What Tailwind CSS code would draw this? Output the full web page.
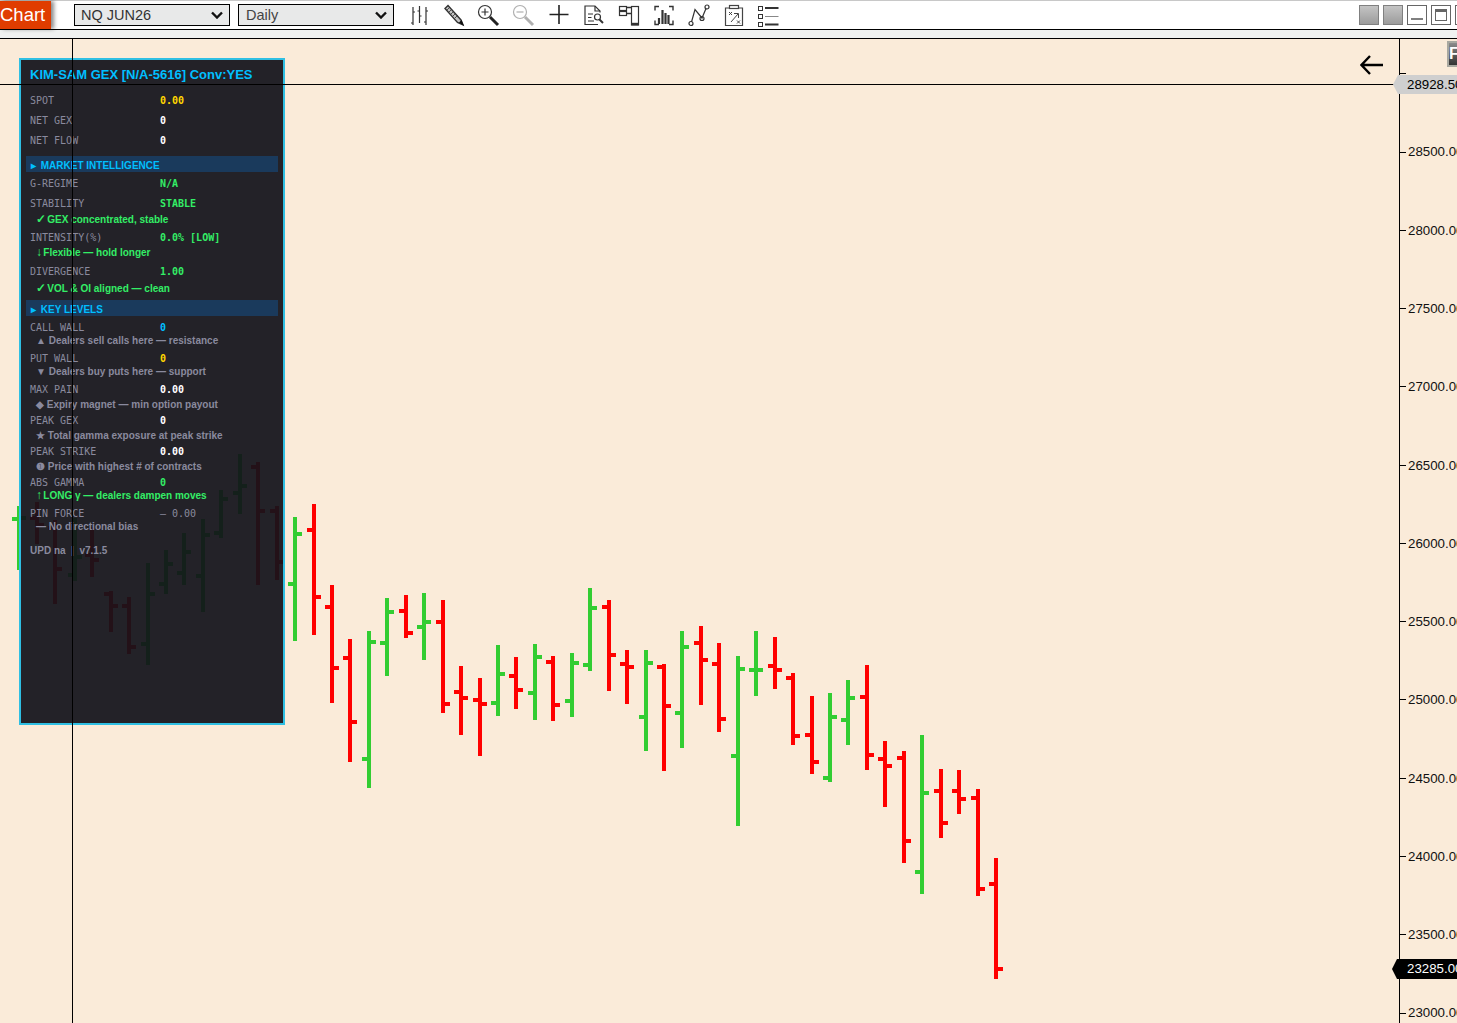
<!DOCTYPE html>
<html lang="en">
<head>
  <meta charset="UTF-8">
  <title>Chart</title>
  <script src="https://cdn.jsdelivr.net/npm/@tailwindcss/browser@4"></script>
</head>
<body class="h-screen overflow-hidden bg-white font-['Liberation_Sans',Arial,sans-serif] flex flex-col">

  <!-- Toolbar -->
  <div class="h-px bg-[#c8c8c8]"></div>
  <header class="h-[28px] flex items-center shrink-0 relative">
    <div class="w-[51px] h-[28px] bg-[#e03c00] text-white text-[18.500px] leading-[27px] shadow-[3px_0_4px_rgba(0,0,0,0.45)] overflow-hidden">Chart</div>
    <div class="ml-[23px] w-[156px] h-[22px] border border-black bg-[#e8e9e9] flex items-center justify-between pl-[6px] pr-[6px] text-[#333] text-[14.500px]">
      <span class="pt-px">NQ JUN26</span>
      <svg width="12" height="8" viewBox="0 0 12 8"><path d="M1 1.5 6 6.5 11 1.5" fill="none" stroke="#111" stroke-width="2.4"/></svg>
    </div>
    <div class="ml-[8px] w-[156px] h-[22px] border border-black bg-[#e8e9e9] flex items-center justify-between pl-[7px] pr-[6px] text-[#444] text-[14.500px]">
      <span class="pt-px">Daily</span>
      <svg width="12" height="8" viewBox="0 0 12 8"><path d="M1 1.5 6 6.5 11 1.5" fill="none" stroke="#111" stroke-width="2.4"/></svg>
    </div>
    <div class="ml-[13.500px] flex gap-[10.900px] text-[#333]">
      <!-- bars -->
      <svg class="w-6 h-6" viewBox="0 0 24 24" fill="none" stroke="currentColor" stroke-width="1.2"><path d="M5 4v18M11.500 3v17M18 4v18M3 20h2M5 9h2M9.500 8h2M11.500 13h2M16 19h2M18 8h2"/></svg>
      <!-- pencil -->
      <svg class="w-6 h-6" viewBox="0 0 24 24"><path d="M3 5.500 6 2.500 19 17l2 5-5.500-2.500Z" fill="#c4c4c4" stroke="#333" stroke-width="1.400"/><path d="M5 7 8 4M7 9l3-3M9 11l3-3M11 13l3-3M13 15l3-3" stroke="#333" stroke-width="0.800"/><path d="M17 19.500 19.500 17 22 23Z" fill="#111"/></svg>
      <!-- zoom in -->
      <svg class="w-6 h-6" viewBox="0 0 24 24" fill="none" stroke="#333"><circle cx="8" cy="9" r="6.500" stroke-width="1.200"/><path d="M4.500 9h7M8 5.500v7" stroke-width="1.200"/><path d="M13 14l8 8" stroke-width="3" stroke="#222"/></svg>
      <!-- zoom out -->
      <svg class="w-6 h-6" viewBox="0 0 24 24" fill="none" stroke="#b0b0b0"><circle cx="8" cy="9" r="6.500" stroke-width="1.200"/><path d="M4.500 9h7" stroke-width="1.200"/><path d="M13 14l8 8" stroke-width="3"/></svg>
      <!-- cross -->
      <svg class="w-6 h-6" viewBox="0 0 24 24" fill="none" stroke="#222" stroke-width="1.600"><path d="M12 2v19M2.500 11.500h19"/></svg>
      <!-- document search -->
      <svg class="w-6 h-6" viewBox="0 0 24 24" fill="none" stroke="#333" stroke-width="1.200"><path d="M16 21.500H3V3h10l5 5v1.500"/><path d="M13 3v5h5" stroke-width="1.200"/><path d="M6 11h5M6 14.500h3.500M6 18h6"/><circle cx="15.500" cy="14" r="3"/><path d="M17.500 16.500l3.500 3.500" stroke-width="2"/></svg>
      <!-- levels panel -->
      <svg class="w-6 h-6" viewBox="0 0 24 24" fill="none" stroke="#333" stroke-width="1.200"><rect x="2.500" y="3.500" width="7" height="4"/><rect x="2.500" y="8.500" width="7" height="4"/><path d="M9.500 4.500h4.500M9.500 10.500h4.500" stroke-width="1.600"/><rect x="14.500" y="3.500" width="7" height="18.500"/><path d="M14.500 21h7" stroke-width="2.400"/></svg>
      <!-- volume -->
      <svg class="w-6 h-6" viewBox="0 0 24 24" fill="none" stroke="#333"><path d="M7 3.500H3v4M17 3.500h4v4M7 21.500H3v-4M17 21.500h4v-4" stroke-width="1.400"/><path d="M7 21V15M10.500 21V7M13.500 21V10M16.500 21V12" stroke-width="2.200"/></svg>
      <!-- line with nodes -->
      <svg class="w-6 h-6" viewBox="0 0 24 24" fill="none" stroke="#333" stroke-width="1.200"><path d="M4.500 19 8 6.500 15 15 19 5.500"/><circle cx="4" cy="20.500" r="2"/><circle cx="15" cy="15.500" r="2"/><circle cx="20" cy="4" r="2"/></svg>
      <!-- clipboard -->
      <svg class="w-6 h-6" viewBox="0 0 24 24" fill="none" stroke="#444" stroke-width="1.200"><path d="M7 5H3.500v17.500h17V5H17"/><rect x="7.500" y="2.500" width="9" height="3"/><path d="M7 9l3 3M10 9l-3 3M15 17.500l3 3M18 17.500l-3 3" stroke-width="1"/><path d="M9 19 16 11M12 10.500h4.500V15" stroke-width="1"/></svg>
      <!-- list -->
      <svg class="w-6 h-6" viewBox="0 0 24 24" fill="none" stroke="#333"><rect x="2.500" y="3.500" width="4" height="4" stroke-width="1"/><rect x="2.500" y="11.500" width="4" height="4" stroke-width="1"/><rect x="2.500" y="19.500" width="4" height="4" stroke-width="1"/><path d="M9 5h13.500M9 21.500h13.500" stroke-width="1.800"/><path d="M9 13.500h13.500" stroke-width="1" stroke="#888"/></svg>
    </div>
    <!-- window buttons -->
    <div class="ml-auto flex gap-[4px] -mr-[18px] shrink-0">
      <div class="w-[20px] h-[20px] border border-[#808080] bg-linear-to-b from-[#c4c4c4] to-[#9c9c9c]"></div>
      <div class="w-[20px] h-[20px] border border-[#808080] bg-linear-to-b from-[#c4c4c4] to-[#9c9c9c]"></div>
      <div class="w-[20px] h-[20px] border border-[#666] bg-white flex items-end justify-center pb-[4px]"><div class="w-[12px] h-[2px] bg-[#808080]"></div></div>
      <div class="w-[20px] h-[20px] border border-[#666] bg-white flex items-center justify-center"><div class="w-[12px] h-[12px] border border-[#666] border-t-[3px]"></div></div>
      <div class="w-[20px] h-[20px] border border-[#666] bg-white"></div>
    </div>
  </header>
  <div class="h-[10px] shrink-0 bg-[#f0f2f1] border-y border-black"></div>

  <!-- Chart area -->
  <main class="relative flex-1 flex bg-[#faebd9] overflow-hidden">
    <div class="relative w-[1399px] shrink-0">
      <svg id="bars" class="absolute inset-0" width="1399" height="984" viewBox="0 39 1399 984"></svg>

      <!-- GEX panel -->
      <section class="absolute left-[19px] top-[19px] w-[266px] h-[667px] border-2 border-[#2fbfe3] bg-[#12121a]/[.93]">
        <div class="mt-[5px] h-[20px] pl-[9px] leading-[20px] text-[13px] font-bold text-[#00bfff] whitespace-nowrap">KIM-SAM GEX [N/A-5616] Conv:YES</div>

        <div class="mt-[8px] h-[14px] pl-[9px] flex items-center font-['DejaVu_Sans_Mono',monospace] text-[10px]"><span class="w-[130px] text-[#8a8a9e]">SPOT</span><span class="text-[#ffd700] font-bold">0.00</span></div>
        <div class="mt-1.5 h-[14px] pl-[9px] flex items-center font-['DejaVu_Sans_Mono',monospace] text-[10px]"><span class="w-[130px] text-[#8a8a9e]">NET GEX</span><span class="text-white font-bold">0</span></div>
        <div class="mt-1.5 h-[14px] pl-[9px] flex items-center font-['DejaVu_Sans_Mono',monospace] text-[10px]"><span class="w-[130px] text-[#8a8a9e]">NET FLOW</span><span class="text-white font-bold">0</span></div>

        <h3 class="mt-[9px] mx-[5px] h-[16px] pl-[5px] bg-[#1a3a5c] text-[#00bfff] text-[10px] font-bold leading-[19px]"><span class="mr-[2px]">▸</span> MARKET INTELLIGENCE</h3>
        <div class="mt-1 h-[14px] pl-[9px] flex items-center font-['DejaVu_Sans_Mono',monospace] text-[10px]"><span class="w-[130px] text-[#8a8a9e]">G-REGIME</span><span class="text-[#33ee66] font-bold">N/A</span></div>
        <div class="mt-1.5 h-[14px] pl-[9px] flex items-center font-['DejaVu_Sans_Mono',monospace] text-[10px]"><span class="w-[130px] text-[#8a8a9e]">STABILITY</span><span class="text-[#33ee66] font-bold">STABLE</span></div>
        <div class="mt-[3px] h-[12px] pl-[15px] leading-[13px] text-[10px] font-bold text-[#33ee66] whitespace-nowrap"><span class="text-[12px] -mr-[1.500px]">✓</span> GEX concentrated, stable</div>
        <div class="mt-[5px] h-[14px] pl-[9px] flex items-center font-['DejaVu_Sans_Mono',monospace] text-[10px]"><span class="w-[130px] text-[#8a8a9e]">INTENSITY(%)</span><span class="text-[#33ee66] font-bold">0.0% [LOW]</span></div>
        <div class="mt-0.5 h-[12px] pl-[15px] leading-[13px] text-[10px] font-bold text-[#33ee66] whitespace-nowrap"><span class="text-[12px] -mr-[1.500px]">↓</span> Flexible — hold longer</div>
        <div class="mt-1.5 h-[14px] pl-[9px] flex items-center font-['DejaVu_Sans_Mono',monospace] text-[10px]"><span class="w-[130px] text-[#8a8a9e]">DIVERGENCE</span><span class="text-[#33ee66] font-bold">1.00</span></div>
        <div class="mt-1 h-[12px] pl-[15px] leading-[13px] text-[10px] font-bold text-[#33ee66] whitespace-nowrap"><span class="text-[12px] -mr-[1.500px]">✓</span> VOL &amp; OI aligned — clean</div>

        <h3 class="mt-1.5 mx-[5px] h-[16px] pl-[5px] bg-[#1a3a5c] text-[#00bfff] text-[10px] font-bold leading-[19px]"><span class="mr-[2px]">▸</span> KEY LEVELS</h3>
        <div class="mt-1 h-[14px] pl-[9px] flex items-center font-['DejaVu_Sans_Mono',monospace] text-[10px]"><span class="w-[130px] text-[#8a8a9e]">CALL WALL</span><span class="text-[#00bfff] font-bold">0</span></div>
        <div class="h-[12px] pl-[15px] leading-[13px] text-[10px] font-bold text-[#8a8a9e] whitespace-nowrap">▲ Dealers sell calls here — resistance</div>
        <div class="mt-[5px] h-[14px] pl-[9px] flex items-center font-['DejaVu_Sans_Mono',monospace] text-[10px]"><span class="w-[130px] text-[#8a8a9e]">PUT WALL</span><span class="text-[#ffd700] font-bold">0</span></div>
        <div class="h-[12px] pl-[15px] leading-[13px] text-[10px] font-bold text-[#8a8a9e] whitespace-nowrap">▼ Dealers buy puts here — support</div>
        <div class="mt-[5px] h-[14px] pl-[9px] flex items-center font-['DejaVu_Sans_Mono',monospace] text-[10px]"><span class="w-[130px] text-[#8a8a9e]">MAX PAIN</span><span class="text-white font-bold">0.00</span></div>
        <div class="mt-0.5 h-[12px] pl-[15px] leading-[13px] text-[10px] font-bold text-[#8a8a9e] whitespace-nowrap">◆ Expiry magnet — min option payout</div>
        <div class="mt-[3px] h-[14px] pl-[9px] flex items-center font-['DejaVu_Sans_Mono',monospace] text-[10px]"><span class="w-[130px] text-[#8a8a9e]">PEAK GEX</span><span class="text-white font-bold">0</span></div>
        <div class="mt-0.5 h-[12px] pl-[15px] leading-[13px] text-[10px] font-bold text-[#8a8a9e] whitespace-nowrap">★ Total gamma exposure at peak strike</div>
        <div class="mt-[3px] h-[14px] pl-[9px] flex items-center font-['DejaVu_Sans_Mono',monospace] text-[10px]"><span class="w-[130px] text-[#8a8a9e]">PEAK STRIKE</span><span class="text-white font-bold">0.00</span></div>
        <div class="mt-0.5 h-[12px] pl-[15px] leading-[13px] text-[10px] font-bold text-[#8a8a9e] whitespace-nowrap">❶ Price with highest # of contracts</div>
        <div class="mt-[3px] h-[14px] pl-[9px] flex items-center font-['DejaVu_Sans_Mono',monospace] text-[10px]"><span class="w-[130px] text-[#8a8a9e]">ABS GAMMA</span><span class="text-[#33ee66] font-bold">0</span></div>
        <div class="h-[12px] pl-[15px] leading-[13px] text-[10px] font-bold text-[#33ee66] whitespace-nowrap"><span class="text-[12px] -mr-[1.500px]">↑</span> LONG γ — dealers dampen moves</div>
        <div class="mt-[5px] h-[14px] pl-[9px] flex items-center font-['DejaVu_Sans_Mono',monospace] text-[10px]"><span class="w-[130px] text-[#8a8a9e]">PIN FORCE</span><span class="text-[#8a8a9e]">— 0.00</span></div>
        <div class="h-[12px] pl-[15px] leading-[13px] text-[10px] font-bold text-[#8a8a9e] whitespace-nowrap">— No directional bias</div>
        <div class="mt-[11px] h-[14px] pl-[9px] leading-[15px] text-[10px] font-bold text-[#8a8a9e] whitespace-pre">UPD na  |  v7.1.5</div>
      </section>

      <!-- Crosshair -->
      <div class="absolute left-[72px] top-0 bottom-0 w-px bg-black"></div>
      <div class="absolute left-0 right-0 top-[45px] h-px bg-black"></div>

      <!-- Back arrow -->
      <svg class="absolute left-[1360px] top-[16px]" width="24" height="20" viewBox="0 0 24 20" fill="none" stroke="#000" stroke-width="2.400"><path d="M10 1 1.500 10l8.500 9M2 10h21"/></svg>
    </div>

    <!-- Price axis -->
    <aside class="relative flex-1 border-l border-black text-[13.300px] leading-none text-[#111] whitespace-nowrap overflow-hidden">
      <div class="flex flex-col mt-[-4.300px]">
        <div class="h-[78.270px] flex items-center"><i class="w-[6px] h-px bg-black shrink-0"></i></div>
        <div class="h-[78.270px] flex items-center"><i class="w-[6px] h-px bg-black shrink-0"></i><span class="ml-[2px]">28500.00</span></div>
        <div class="h-[78.270px] flex items-center"><i class="w-[6px] h-px bg-black shrink-0"></i><span class="ml-[2px]">28000.00</span></div>
        <div class="h-[78.270px] flex items-center"><i class="w-[6px] h-px bg-black shrink-0"></i><span class="ml-[2px]">27500.00</span></div>
        <div class="h-[78.270px] flex items-center"><i class="w-[6px] h-px bg-black shrink-0"></i><span class="ml-[2px]">27000.00</span></div>
        <div class="h-[78.270px] flex items-center"><i class="w-[6px] h-px bg-black shrink-0"></i><span class="ml-[2px]">26500.00</span></div>
        <div class="h-[78.270px] flex items-center"><i class="w-[6px] h-px bg-black shrink-0"></i><span class="ml-[2px]">26000.00</span></div>
        <div class="h-[78.270px] flex items-center"><i class="w-[6px] h-px bg-black shrink-0"></i><span class="ml-[2px]">25500.00</span></div>
        <div class="h-[78.270px] flex items-center"><i class="w-[6px] h-px bg-black shrink-0"></i><span class="ml-[2px]">25000.00</span></div>
        <div class="h-[78.270px] flex items-center"><i class="w-[6px] h-px bg-black shrink-0"></i><span class="ml-[2px]">24500.00</span></div>
        <div class="h-[78.270px] flex items-center"><i class="w-[6px] h-px bg-black shrink-0"></i><span class="ml-[2px]">24000.00</span></div>
        <div class="h-[78.270px] flex items-center"><i class="w-[6px] h-px bg-black shrink-0"></i><span class="ml-[2px]">23500.00</span></div>
        <div class="h-[78.270px] flex items-center"><i class="w-[6px] h-px bg-black shrink-0"></i><span class="ml-[2px]">23000.00</span></div>
      </div>
    </aside>

    <!-- Price tags -->
    <div class="absolute left-[1393px] top-[36px] w-[64px] h-[19px] pl-[14px] bg-[#cfcfcf] text-[13.300px] leading-[19px] text-black whitespace-nowrap overflow-hidden [clip-path:polygon(5px_0,100%_0,100%_100%,5px_100%,0_50%)]">28928.50</div>
    <div class="absolute left-[1392px] top-[920px] w-[65px] h-[20px] pl-[15px] bg-black text-[13.300px] leading-[20px] text-white whitespace-nowrap overflow-hidden [clip-path:polygon(5px_0,100%_0,100%_100%,5px_100%,0_50%)]">23285.00</div>

    <!-- F button -->
    <div class="absolute left-[1447px] top-[2px] w-[12px] h-[26px] border-2 border-[#a8a8a0] bg-linear-to-b from-[#8c8c8c] to-[#333] text-white text-[16px] font-bold leading-[22px] overflow-hidden">F</div>
  </main>

  <script>
    // x, high, low, open tick, close tick (page pixels)
    const up = "#32cd32", down = "#ff0000";
    const bars = [
      [17,506,570,519,518,up],[35,502,544,518,525,down],[53,520,604,528,569,down],[73,518,581,575,557,up],
      [90,527,577,555,560,down],[109,591,632,594,606,down],[127,597,654,606,647,down],[146,563,665,644,594,up],
      [164,550,594,584,564,up],[182,533,585,573,552,up],[201,519,612,576,535,up],[219,490,538,533,499,up],
      [238,454,514,493,486,up],[256,462,585,467,511,down],[275,506,580,511,562,down],
      [293,517,641,584,534,up],[312,504,635,530,597,down],[330,585,703,607,668,down],[348,639,762,658,722,down],
      [367,631,788,759,642,up],[385,598,676,643,612,up],[404,595,638,611,633,down],[422,593,660,627,622,up],
      [441,600,713,622,704,down],[459,666,735,692,698,down],[478,678,756,700,704,down],[496,645,716,703,674,up],
      [514,657,709,676,690,down],[533,644,720,693,657,up],[551,656,721,662,705,down],[570,653,717,701,663,up],
      [588,588,671,665,608,up],[607,600,691,607,655,down],[625,650,704,664,667,down],[644,650,751,717,663,up],
      [662,664,771,667,706,down],[680,631,748,713,647,up],[699,626,705,643,660,down],[717,643,732,664,719,down],
      [736,656,826,756,669,up],[754,631,696,670,670,up],[773,637,689,666,670,down],[791,673,745,678,736,down],
      [810,696,774,735,762,down],[828,693,782,778,717,up],[846,680,745,720,698,up],[865,665,770,697,755,down],
      [883,741,807,759,766,down],[902,751,863,758,841,down],[920,735,894,872,793,up],[939,769,838,791,823,down],
      [957,770,814,791,799,down],[976,789,896,798,889,down],[994,858,979,884,969,down]
    ];
    let out = "";
    bars.forEach(([x, hi, lo, open, close, color]) => {
      out += `<rect x="${x}" y="${hi}" width="4" height="${lo - hi}" fill="${color}"/>`;
      out += `<rect x="${x - 5}" y="${open - 2}" width="5" height="4" fill="${color}"/>`;
      out += `<rect x="${x + 4}" y="${close - 2}" width="5" height="4" fill="${color}"/>`;
    });
    document.getElementById("bars").innerHTML = out;
  </script>
</body>
</html>
